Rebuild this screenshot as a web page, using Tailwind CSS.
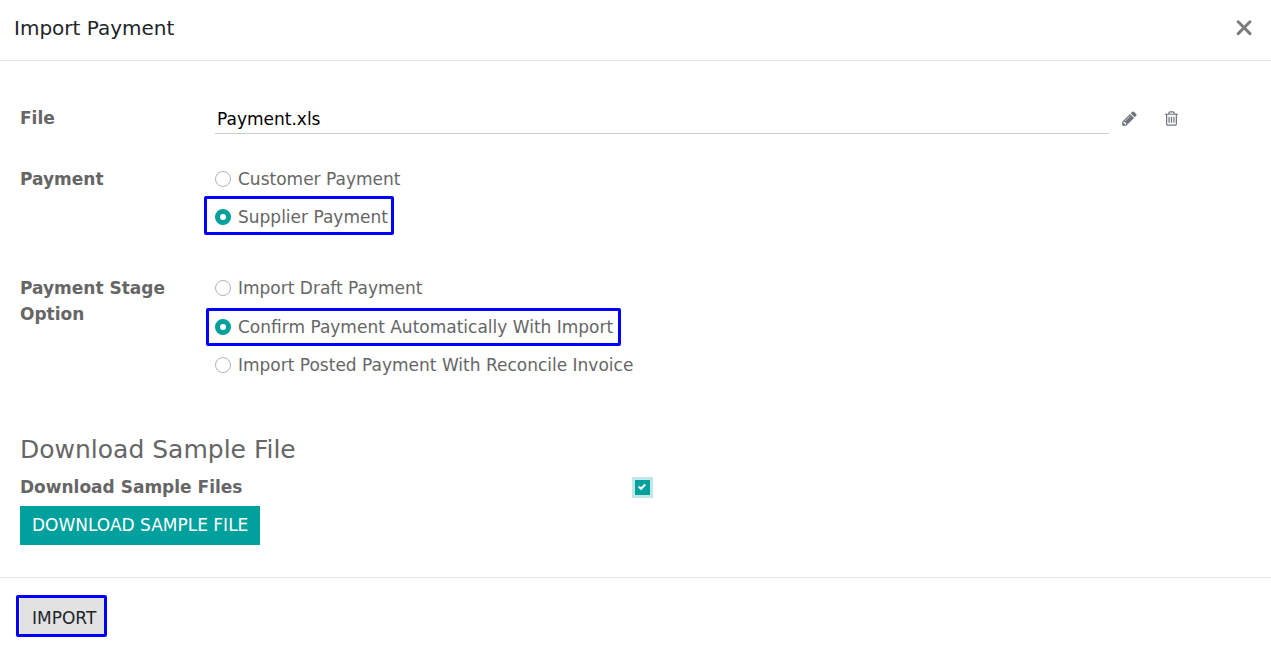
<!DOCTYPE html>
<html lang="en">
<head>
<meta charset="utf-8">
<meta name="viewport" content="width=device-width, initial-scale=1">
<title>Import Payment</title>
<script src="https://cdn.jsdelivr.net/npm/@tailwindcss/browser@4"></script>
</head>
<body class="bg-white font-['DejaVu_Sans',sans-serif] text-[17px] leading-[26px] text-[#666666]">
<main>
  <header class="flex items-center justify-between border-b border-[#dee2e6] pt-3 pb-4 pl-[14px] pr-[19px]">
    <h1 class="text-[20px] leading-[32px] text-[#212529]">Import Payment</h1>
    <button type="button" aria-label="Close" class="text-[#7c7c7c]">
      <svg class="size-4" viewBox="0 0 16 16" fill="none" stroke="currentColor" stroke-width="3" stroke-linecap="round"><path d="M2.200 1.800l11.800 11.800M14 1.800L2.200 13.600"/></svg>
    </button>
  </header>

  <form class="px-5 pt-11">
    <div class="flex items-start pr-[71px]">
      <label for="file" class="w-[195px] shrink-0 font-bold">File</label>
      <input id="file" type="text" value="Payment.xls" class="h-[29px] min-w-0 flex-1 border-b border-[#cccccc] px-[2px] text-black outline-none">
      <button type="button" aria-label="Edit file" class="ml-3 mt-[5px] text-[#6c757d]">
        <svg class="size-[17px]" viewBox="0 0 1792 1792" fill="currentColor"><path d="M491 1536l91-91-235-235-91 91v107h128v128h107zm523-928q0-22-22-22-10 0-17 7l-542 542q-7 7-7 17 0 22 22 22 10 0 17-7l542-542q7-7 7-17zm-54-192l416 416-832 832h-416v-416zm683 96q0 53-37 90l-166 166-416-416 166-165q36-38 90-38 53 0 91 38l235 234q37 39 37 91z"/></svg>
      </button>
      <button type="button" aria-label="Delete file" class="ml-[25px] mt-[5px] text-[#6c757d]">
        <svg class="size-[17px]" viewBox="0 0 1792 1792" fill="currentColor"><path d="M704 736v576q0 14-9 23t-23 9h-64q-14 0-23-9t-9-23v-576q0-14 9-23t23-9h64q14 0 23 9t9 23zm256 0v576q0 14-9 23t-23 9h-64q-14 0-23-9t-9-23v-576q0-14 9-23t23-9h64q14 0 23 9t9 23zm256 0v576q0 14-9 23t-23 9h-64q-14 0-23-9t-9-23v-576q0-14 9-23t23-9h64q14 0 23 9t9 23zm128 724v-948h-896v948q0 22 7 40.500t14.500 27 10.500 8.500h832q3 0 10.500-8.500t14.500-27 7-40.500zm-672-1076h448l-48-117q-7-9-17-11h-317q-10 2-17 11zm928 32v64q0 14-9 23t-23 9h-96v948q0 83-47 143.500t-113 60.500h-832q-66 0-113-58.500t-47-141.500v-952h-96q-14 0-23-9t-9-23v-64q0-14 9-23t23-9h309l70-167q15-37 54-63t79-26h320q40 0 79 26t54 63l70 167h309q14 0 23 9t9 23z"/></svg>
      </button>
    </div>

    <fieldset class="mt-[26px] flex" aria-labelledby="payment">
      <div id="payment" class="w-[195px] shrink-0 pt-[6px] font-bold">Payment</div>
      <div class="flex flex-col items-start">
        <label class="flex items-center gap-[7px] py-[6px]"><input type="radio" name="payment" class="size-4 appearance-none rounded-full border border-[#adb5bd] checked:border-5 checked:border-[#00a09d]">Customer Payment</label>
        <label class="relative flex items-center gap-[7px] py-[6px]"><input type="radio" name="payment" checked class="size-4 appearance-none rounded-full border border-[#adb5bd] checked:border-5 checked:border-[#00a09d]">Supplier Payment<span class="pointer-events-none absolute -left-[11px] -right-[6px] -top-[2px] bottom-[1px] rounded-xs border-3 border-[#0000ff]"></span></label>
      </div>
    </fieldset>

    <fieldset class="mt-[33px] flex" aria-labelledby="stage">
      <div id="stage" class="w-[195px] shrink-0 pt-[6px] pr-5 font-bold">Payment Stage Option</div>
      <div class="flex flex-col items-start">
        <label class="flex items-center gap-[7px] py-[6px]"><input type="radio" name="stage" class="size-4 appearance-none rounded-full border border-[#adb5bd] checked:border-5 checked:border-[#00a09d]">Import Draft Payment</label>
        <label class="relative mt-px flex items-center gap-[7px] py-[6px]"><input type="radio" name="stage" checked class="size-4 appearance-none rounded-full border border-[#adb5bd] checked:border-5 checked:border-[#00a09d]">Confirm Payment Automatically With Import<span class="pointer-events-none absolute -left-[9px] -right-2 inset-y-0 rounded-xs border-3 border-[#0000ff]"></span></label>
        <label class="flex items-center gap-[7px] py-[6px]"><input type="radio" name="stage" class="size-4 appearance-none rounded-full border border-[#adb5bd] checked:border-5 checked:border-[#00a09d]">Import Posted Payment With Reconcile Invoice</label>
      </div>
    </fieldset>

    <h2 class="mt-[50px] text-[25px] leading-[32px]">Download Sample File</h2>
    <div class="mt-2 flex items-center">
      <label for="samples" class="w-1/2 font-bold">Download Sample Files</label>
      <div class="-ml-px grid size-[15px]">
        <input id="samples" type="checkbox" checked class="col-start-1 row-start-1 size-[15px] appearance-none bg-white ring-3 ring-[#bfe7e6] checked:bg-[#00a09d]">
        <svg class="pointer-events-none col-start-1 row-start-1 size-2 place-self-center" viewBox="0 0 8 8" fill="white"><path d="M6.564.75l-3.590 3.612-1.538-1.550L0 4.260 2.974 7.250 8 2.193z"/></svg>
      </div>
    </div>
    <button type="button" class="mt-[6px] block bg-[#00a09d] px-3 pt-[6px] pb-[7px] text-white">DOWNLOAD SAMPLE FILE</button>
  </form>

  <footer class="mt-8 border-t border-[#e5e5e5] px-5 pt-5 pb-6">
    <button type="button" class="relative block bg-[#e2e2e2] pl-3 pt-[7px] pb-[6px] pr-2 text-[#212529]">IMPORT<span class="pointer-events-none absolute -left-1 -right-[3px] -top-[3px] bottom-0 rounded-xs border-3 border-[#0000ff]"></span></button>
  </footer>
</main>
</body>
</html>
